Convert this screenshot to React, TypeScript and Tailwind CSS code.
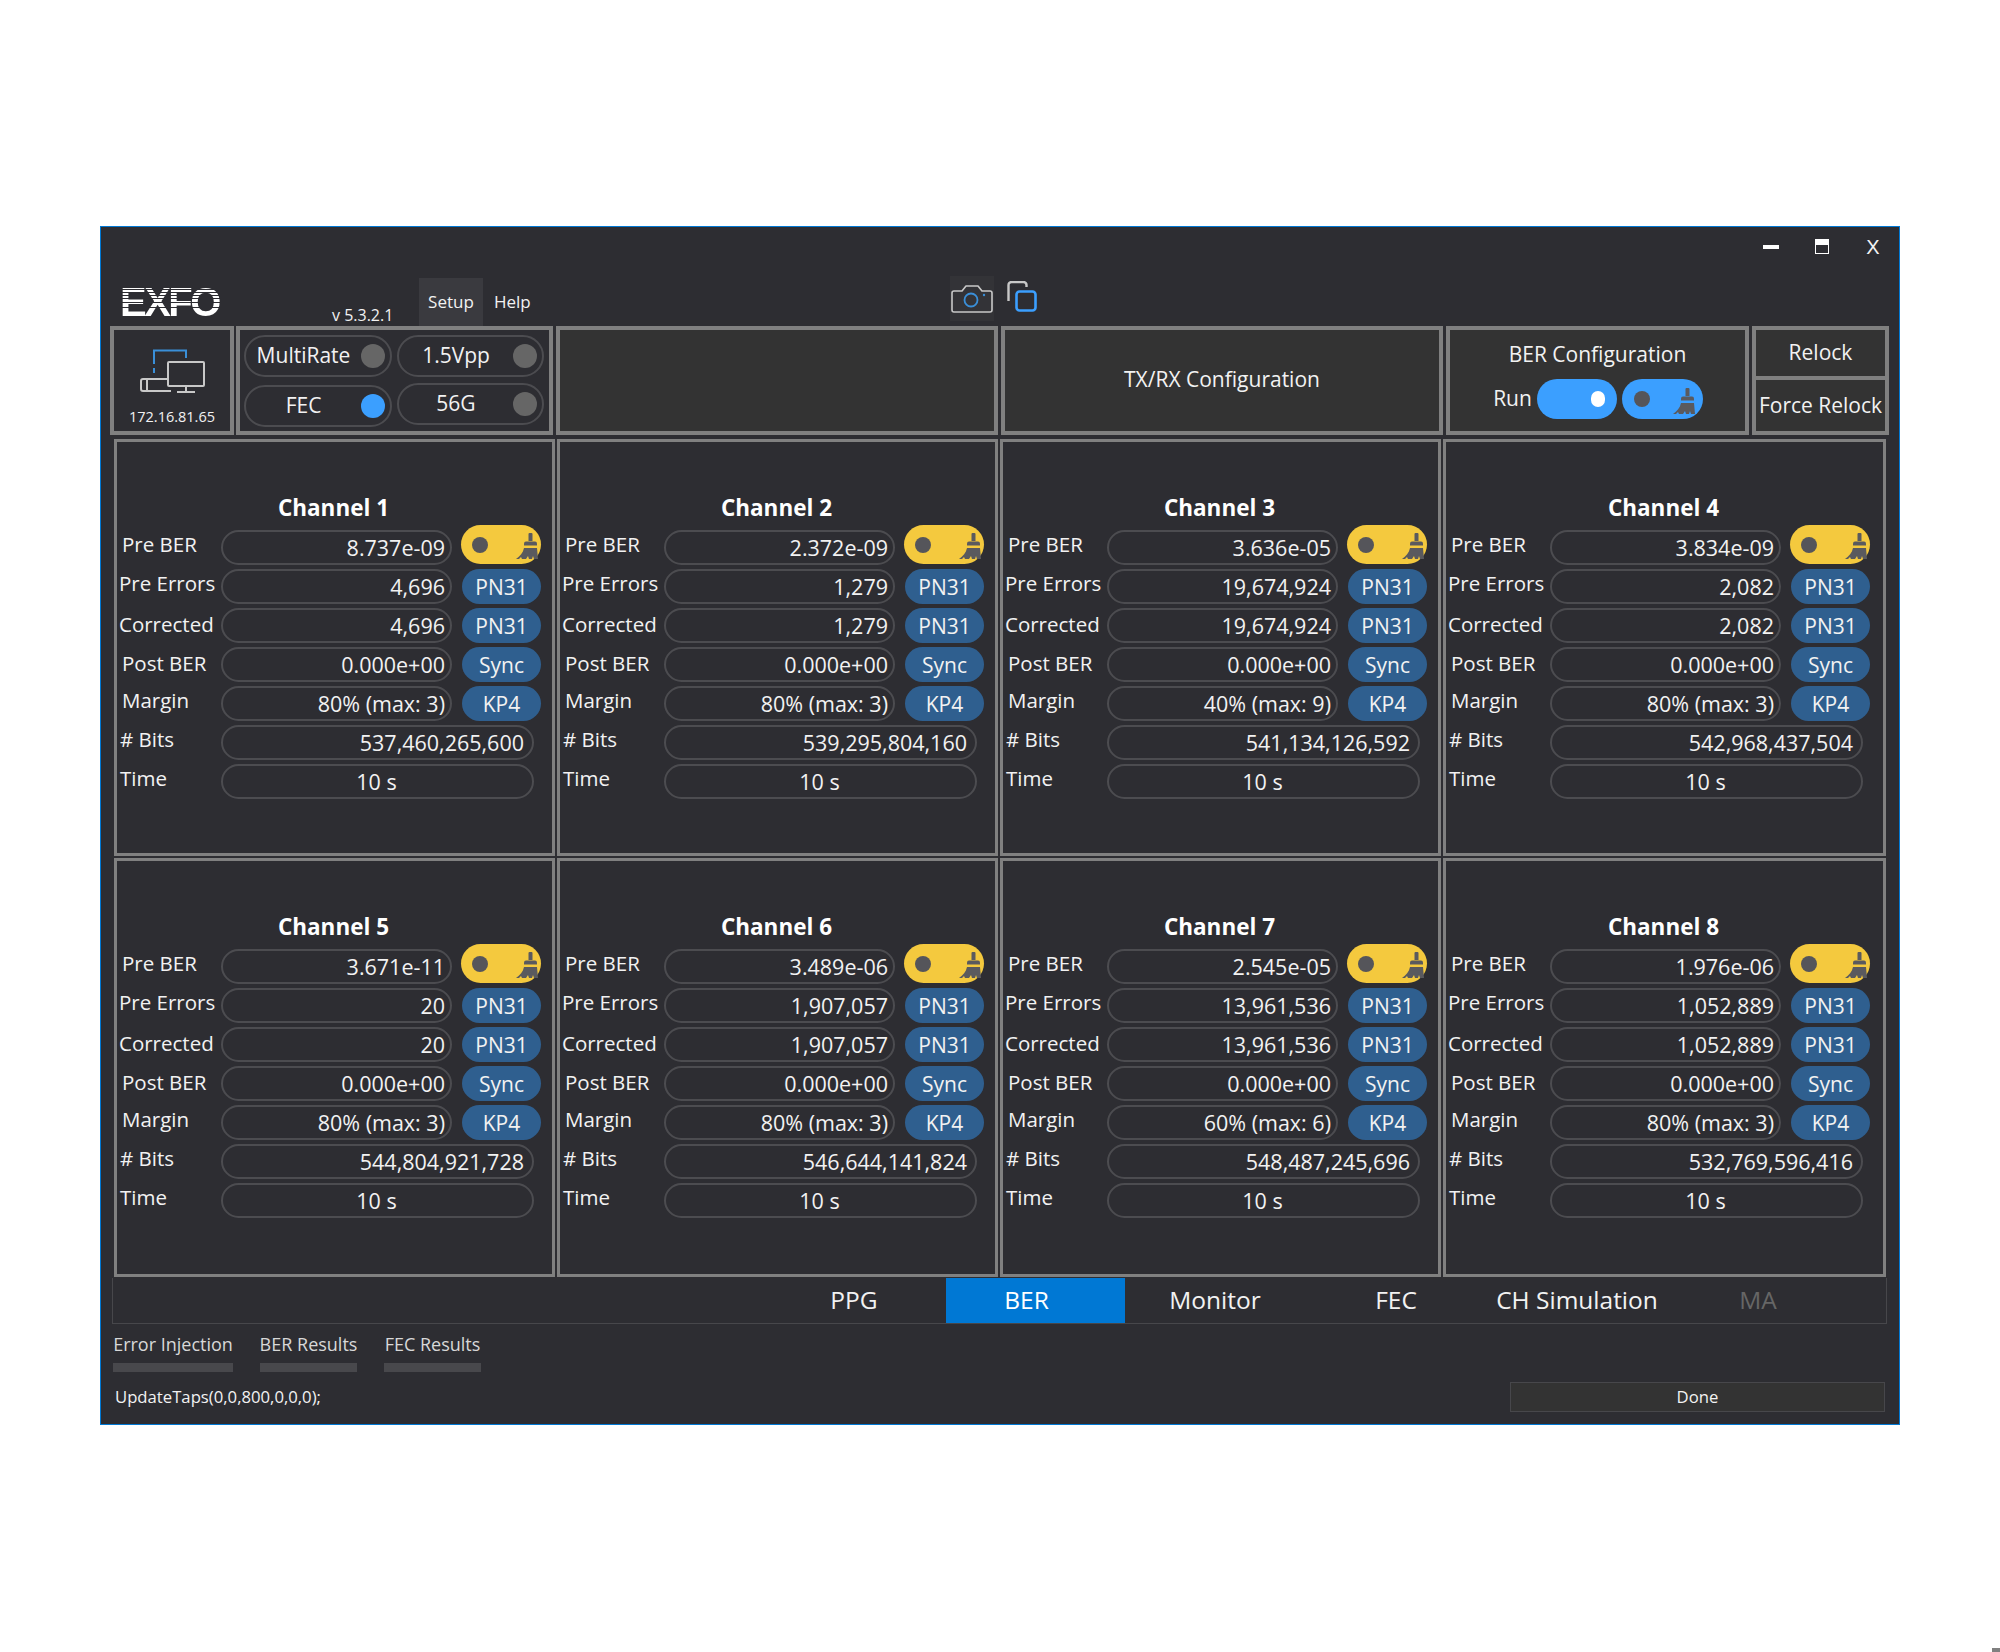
import type { ReactNode } from "react";

const FONT = "font-['Open_Sans','Noto_Sans',sans-serif]";

type Channel = {
  name: string;
  preBer: string;
  errors: string;
  margin: string;
  bits: string;
};

const CHANNELS: Channel[] = [
  { name: "Channel 1", preBer: "8.737e-09", errors: "4,696", margin: "80% (max: 3)", bits: "537,460,265,600" },
  { name: "Channel 2", preBer: "2.372e-09", errors: "1,279", margin: "80% (max: 3)", bits: "539,295,804,160" },
  { name: "Channel 3", preBer: "3.636e-05", errors: "19,674,924", margin: "40% (max: 9)", bits: "541,134,126,592" },
  { name: "Channel 4", preBer: "3.834e-09", errors: "2,082", margin: "80% (max: 3)", bits: "542,968,437,504" },
  { name: "Channel 5", preBer: "3.671e-11", errors: "20", margin: "80% (max: 3)", bits: "544,804,921,728" },
  { name: "Channel 6", preBer: "3.489e-06", errors: "1,907,057", margin: "80% (max: 3)", bits: "546,644,141,824" },
  { name: "Channel 7", preBer: "2.545e-05", errors: "13,961,536", margin: "60% (max: 6)", bits: "548,487,245,696" },
  { name: "Channel 8", preBer: "1.976e-06", errors: "1,052,889", margin: "80% (max: 3)", bits: "532,769,596,416" },
];

function BrushIcon({ className }: { className: string }) {
  return (
    <svg viewBox="0 0 22 26" className={className} fill="currentColor">
      <path d="M13.5 0h2a1 1 0 0 1 1 1v7h-4V1a1 1 0 0 1 1-1z" />
      <path d="M10 8.500h9a2 2 0 0 1 2 2v2H8v-2a2 2 0 0 1 2-2z" />
      <path d="M8 15h13l1 11h-4l-1-3-1 3h-3l-1-3-2 3H6l-1-2-2 2H0c4-3 7-6 8-11z" />
    </svg>
  );
}

function MonitorIcon() {
  return (
    <svg viewBox="0 0 65 44" className="h-[44px] w-[65px]" fill="none">
      <path d="M14 15V1.500h32V9" stroke="#3a8fd8" strokeWidth="2" />
      <path d="M14 19v6" stroke="#3a8fd8" strokeWidth="2" strokeDasharray="5 3" />
      <rect x="28" y="13" width="36" height="24" rx="1" stroke="#c8c8c8" strokeWidth="2" />
      <path d="M46 37v5M37 43h18" stroke="#c8c8c8" strokeWidth="2" />
      <path d="M27 30H3a2 2 0 0 0-2 2v8a2 2 0 0 0 2 2h28" stroke="#c8c8c8" strokeWidth="2" />
      <path d="M7 30v12" stroke="#c8c8c8" strokeWidth="2" />
    </svg>
  );
}

function CameraIcon() {
  return (
    <svg viewBox="0 0 44 30" className="h-[30px] w-[44px]" fill="none">
      <path
        d="M4 7h8l4-5h12l4 5h8a2 2 0 0 1 2 2v17a2 2 0 0 1-2 2H4a2 2 0 0 1-2-2V9a2 2 0 0 1 2-2z"
        stroke="#c8c8c8"
        strokeWidth="1.6"
        strokeLinejoin="round"
      />
      <circle cx="21" cy="16" r="6.500" stroke="#3a8fd8" strokeWidth="1.800" />
      <circle cx="34" cy="11" r="1.200" fill="#3a8fd8" />
    </svg>
  );
}

function CopyIcon() {
  return (
    <svg viewBox="0 0 30 31" className="h-[31px] w-[30px]" fill="none">
      <path d="M1.500 20V4a3 3 0 0 1 3-3h12a3 3 0 0 1 3 3v2" stroke="#c8c8c8" strokeWidth="2.400" />
      <rect x="9.500" y="10.500" width="19" height="19" rx="3" stroke="#3b9fff" strokeWidth="2.600" />
    </svg>
  );
}

function Pill({ children, className }: { children: ReactNode; className: string }) {
  return (
    <div className={`flex h-[35px] items-center rounded-full border-2 border-[#4c4c50] pt-[2px] text-[21.5px] ${className}`}>
      {children}
    </div>
  );
}

function Badge({ children }: { children: ReactNode }) {
  return (
    <div className="ml-[10px] flex h-[35px] w-[79px] items-center justify-center rounded-full bg-[#2f5f8f] pt-[2px]">
      {children}
    </div>
  );
}

function Row({ label, labelClass, children }: { label: string; labelClass: string; children: ReactNode }) {
  return (
    <div className="flex h-[35px] items-center">
      <div className={`w-[104px] shrink-0 whitespace-nowrap text-[20.5px] ${labelClass}`}>{label}</div>
      {children}
    </div>
  );
}

function ChannelPanel({ channel }: { channel: Channel }) {
  return (
    <div className="h-full border-[3px] border-[#808080] pt-[50px] text-[21px] text-[#f2f2f2]">
      <div className="mb-[7px] h-[31px] pr-[2px] text-center text-[22.5px] font-bold leading-[31px] text-white">
        {channel.name}
      </div>
      <div className="flex flex-col gap-[4px]">
        <Row label="Pre BER" labelClass="pb-[6px] pl-[5px]">
          <Pill className="w-[231px] justify-end pr-[5px]">{channel.preBer}</Pill>
          <div className="relative -mt-[6px] ml-[9px] flex h-[39px] w-[80px] items-center justify-between rounded-full bg-[#f4c93e] pl-[11px] pr-[3px]">
            <span className="size-[16px] rounded-full bg-[#55555a]" />
            <BrushIcon className="mt-[3px] h-[26px] w-[22px] text-[#5a5a5e]" />
          </div>
        </Row>
        <Row label="Pre Errors" labelClass="pb-[6px] pl-[2px]">
          <Pill className="w-[231px] justify-end pr-[5px]">{channel.errors}</Pill>
          <Badge>PN31</Badge>
        </Row>
        <Row label="Corrected" labelClass="pb-[2px] pl-[2px]">
          <Pill className="w-[231px] justify-end pr-[5px]">{channel.errors}</Pill>
          <Badge>PN31</Badge>
        </Row>
        <Row label="Post BER" labelClass="pb-[2px] pl-[5px]">
          <Pill className="w-[231px] justify-end pr-[5px]">0.000e+00</Pill>
          <Badge>Sync</Badge>
        </Row>
        <Row label="Margin" labelClass="pb-[6px] pl-[5px]">
          <Pill className="w-[231px] justify-end pr-[5px]">{channel.margin}</Pill>
          <Badge>KP4</Badge>
        </Row>
        <Row label="# Bits" labelClass="pb-[6px] pl-[3px]">
          <Pill className="w-[313px] justify-end pr-[8px]">{channel.bits}</Pill>
        </Row>
        <Row label="Time" labelClass="pb-[6px] pl-[3px]">
          <Pill className="w-[313px] justify-center pr-[2px]">10 s</Pill>
        </Row>
      </div>
    </div>
  );
}

function Toggle({ label, on, className }: { label: string; on: boolean; className: string }) {
  return (
    <div className={`flex h-[42px] items-center rounded-full border-2 border-[#4c4c50] ${className}`}>
      <span className="flex-1 text-center">{label}</span>
      <span className={`size-[24px] rounded-full ${on ? "bg-[#3b9fff]" : "bg-[#666666]"}`} />
    </div>
  );
}

export default function App() {
  return (
    <div className={`relative h-[1652px] w-[2000px] bg-white pl-[100px] pt-[226px] ${FONT}`}>
      <div className="flex h-[1199px] w-[1800px] flex-col border border-[#0078d4] bg-[#2d2d32] text-[#f2f2f2]">
        {/* window controls */}
        <div className="flex h-[39px] shrink-0 items-center justify-end gap-[36px] pr-[18px]">
          <span className="h-[4px] w-[16px] bg-white" />
          <span className="h-[15px] w-[14px] border-[1.5px] border-t-[6px] border-white" />
          <span className="w-[16px] text-center font-['Liberation_Sans',sans-serif] text-[20px] leading-none">X</span>
        </div>

        {/* menu row */}
        <div className="flex h-[60px] shrink-0 items-end pl-[19px]">
          <div className="mb-[9px] w-[102px] bg-[linear-gradient(to_bottom,#fff_2px,#2d2d32_2px,#2d2d32_3px,#fff_3px,#fff_5px,#2d2d32_5px,#2d2d32_6px,#fff_6px,#fff_8px,#2d2d32_8px,#2d2d32_9px,#fff_9px,#fff_11px,#2d2d32_11px,#2d2d32_12px,#fff_12px,#fff_15px,#2d2d32_15px,#2d2d32_16px,#fff_16px,#fff_20px,#2d2d32_20px,#2d2d32_21px,#fff_21px)] bg-clip-text font-['Liberation_Sans',sans-serif] text-[40px] font-bold leading-[30px] tracking-[-2.5px] text-transparent">
            EXFO
          </div>
          <div className="mb-[1px] ml-[110px] w-[87px] text-[16px] leading-[20px]">v 5.3.2.1</div>
          <div className="flex h-[48px] w-[64px] items-center justify-center bg-[#3a3a3f] text-[17px]">Setup</div>
          <div className="ml-[11px] flex h-[48px] items-center text-[17px]">Help</div>
          <div className="mb-[5px] ml-[419px] flex h-[45px] w-[44px] items-center justify-center bg-[#333337]">
            <CameraIcon />
          </div>
          <div className="mb-[14px] ml-[13px]">
            <CopyIcon />
          </div>
        </div>

        {/* top panels */}
        <div className="ml-[9px] flex h-[109px] shrink-0 gap-[3px] text-[21px]">
          <div className="flex w-[124px] flex-col items-center border-4 border-[#808080] pt-[19px]">
            <MonitorIcon />
            <div className="mt-[14px] text-[14.5px] leading-[20px]">172.16.81.65</div>
          </div>
          <div className="-ml-[1px] w-[317px] border-4 border-[#808080] px-[4px] py-[5px]">
            <div className="flex gap-[5px]">
              <Toggle label="MultiRate" on={false} className="w-[148px] pr-[5px]" />
              <Toggle label="1.5Vpp" on={false} className="w-[147px] pr-[5px]" />
            </div>
            <div className="mt-[8px] flex gap-[5px]">
              <Toggle label="FEC" on className="w-[148px] pr-[5px]" />
              <Toggle label="56G" on={false} className="-mt-[2px] w-[147px] pr-[5px]" />
            </div>
          </div>
          <div className="w-[442px] border-4 border-[#808080] bg-[#333333]" />
          <div className="flex w-[442px] items-center justify-center border-4 border-[#808080] bg-[#333333] pb-[2px]">
            TX/RX Configuration
          </div>
          <div className="flex w-[303px] flex-col items-center border-4 border-[#808080] bg-[#333333] pt-[9px]">
            <div className="leading-[30px]">BER Configuration</div>
            <div className="mt-[10px] flex items-center gap-[5px] pl-[1px]">
              <span>Run</span>
              <div className="flex h-[40px] w-[80px] items-center justify-end rounded-full bg-[#3b9fff] pr-[12px]">
                <span className="h-[16px] w-[14px] rounded-full bg-white" />
              </div>
              <div className="flex h-[40px] w-[81px] items-center justify-between rounded-full bg-[#3b9fff] pl-[12px] pr-[8px]">
                <span className="size-[16px] rounded-full bg-[#55555a]" />
                <BrushIcon className="mt-[4px] h-[26px] w-[22px] text-[#5a5a5e]" />
              </div>
            </div>
          </div>
          <div className="flex w-[137px] flex-col border-4 border-[#808080] bg-[#333333]">
            <div className="flex h-[50px] items-center justify-center border-b-4 border-[#808080]">Relock</div>
            <div className="flex flex-1 items-center justify-center whitespace-nowrap">Force Relock</div>
          </div>
        </div>

        {/* channel grid */}
        <div className="ml-[13px] mt-[4px] grid shrink-0 grid-cols-[441px_441px_441px_443px] grid-rows-[417px_419px] gap-[2px]">
          {CHANNELS.map((channel) => (
            <ChannelPanel key={channel.name} channel={channel} />
          ))}
        </div>

        {/* main tabs */}
        <div className="ml-[11px] mt-[1px] flex h-[46px] w-[1775px] shrink-0 border-x border-b border-[#47474b] pl-[653px] text-[24.5px]">
          <div className="flex w-[180px] items-center justify-center pr-[4px]">PPG</div>
          <div className="flex w-[179px] items-center justify-center bg-[#0078d4] pr-[18px] text-white">BER</div>
          <div className="flex w-[180px] items-center justify-center">Monitor</div>
          <div className="flex w-[182px] items-center justify-center">FEC</div>
          <div className="flex w-[180px] items-center justify-center whitespace-nowrap">CH Simulation</div>
          <div className="flex w-[184px] items-center justify-center pr-[2px] text-[#666666]">MA</div>
        </div>

        {/* sub tabs */}
        <div className="ml-[12px] mt-[10px] flex h-[38px] shrink-0 gap-[27px] text-[18px] text-[#d8d8d8]">
          <div className="flex w-[120px] flex-col items-center justify-between">
            <span className="whitespace-nowrap leading-[21px]">Error Injection</span>
            <span className="h-[9px] w-full bg-[#48484c]" />
          </div>
          <div className="flex w-[97px] flex-col items-center justify-between">
            <span className="whitespace-nowrap leading-[21px]">BER Results</span>
            <span className="h-[9px] w-full bg-[#48484c]" />
          </div>
          <div className="flex w-[97px] flex-col items-center justify-between">
            <span className="whitespace-nowrap leading-[21px]">FEC Results</span>
            <span className="h-[9px] w-full bg-[#48484c]" />
          </div>
        </div>

        {/* status */}
        <div className="mt-[10px] flex h-[30px] shrink-0 items-center justify-between pl-[14px] pr-[14px] text-[16.7px]">
          <span>UpdateTaps(0,0,800,0,0,0);</span>
          <div className="flex h-[30px] w-[375px] items-center justify-center border border-[#47474b] bg-[#333333]">Done</div>
        </div>
      </div>
      <div className="absolute bottom-0 right-0 h-[4px] w-[8px] bg-[#808080]" />
    </div>
  );
}
